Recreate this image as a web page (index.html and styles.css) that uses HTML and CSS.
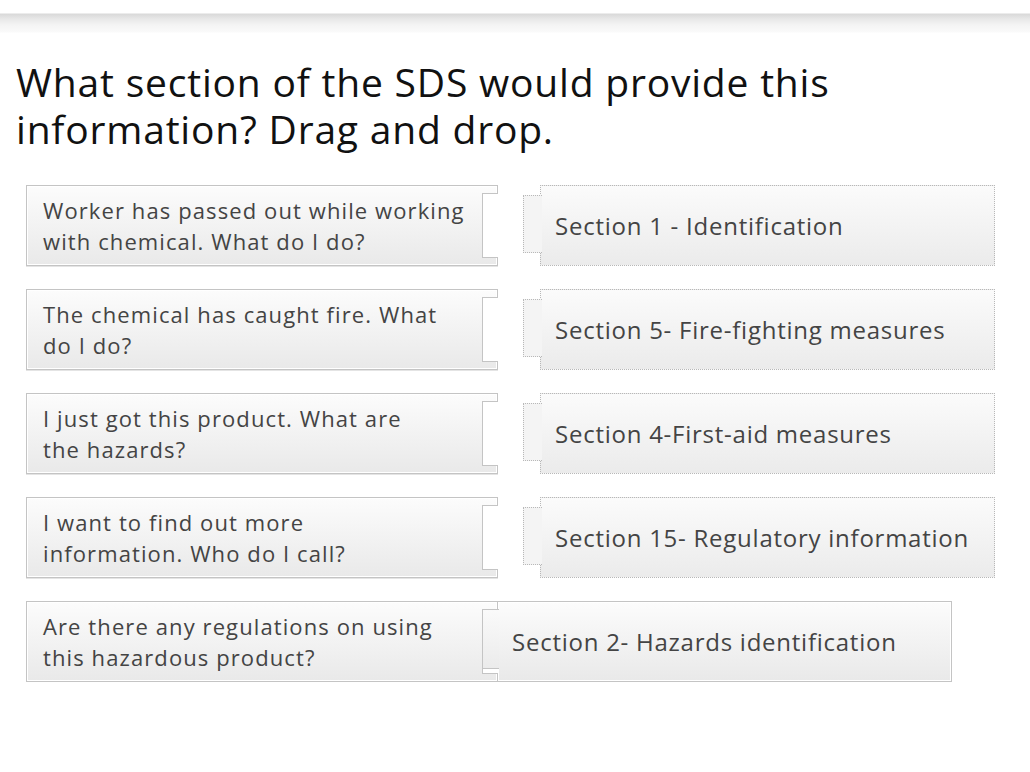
FILE: index.html
```html
<!DOCTYPE html>
<html lang="en">
<head>
    <meta charset="UTF-8">
    <title>SDS Drag and Drop</title>
    <link rel="stylesheet" href="styles.css">
</head>
<body>

    <!-- Top bar -->
    <div class="topbar"></div>

    <h1 class="question">What section of the SDS would provide this information? Drag and drop.</h1>

    <!-- Matching rows -->
    <div class="board">
        <div class="row">
            <div class="prompt">Worker has passed out while working<br>with chemical. What do I do?</div>
            <div class="target">Section 1 - Identification</div>
        </div>
        <div class="row">
            <div class="prompt">The chemical has caught fire. What<br>do I do?</div>
            <div class="target">Section 5- Fire-fighting measures</div>
        </div>
        <div class="row">
            <div class="prompt">I just got this product. What are<br>the hazards?</div>
            <div class="target">Section 4-First-aid measures</div>
        </div>
        <div class="row">
            <div class="prompt">I want to find out more<br>information. Who do I call?</div>
            <div class="target">Section 15- Regulatory information</div>
        </div>
        <div class="row">
            <div class="prompt">Are there any regulations on using<br>this hazardous product?</div>
            <div class="answer">Section 2- Hazards identification</div>
        </div>
    </div>

</body>
</html>
```

FILE: styles.css
```css
body {
    margin: 0;
    font-family: "Open Sans", "DejaVu Sans", sans-serif;
    background: #fff;
    color: #111;
}

/* Top shadow bar */
.topbar {
    height: 33px;
    background: linear-gradient(to bottom, #fff 0, #fff 13px, #d9d9d9 14px, #e8e8e8 19px, #f4f4f4 25px, #fafafa 32px, #fff 33px);
}

.question {
    font-size: 39px;
    font-weight: normal;
    letter-spacing: 0.8px;
    line-height: 47px;
    margin: 25px 0 0 16px;
    width: 880px;
    color: #111;
}

/* Rows */
.board {
    display: flex;
    flex-direction: column;
    gap: 23px;
    margin: 33px 0 0 26px;
}

.row {
    display: flex;
    height: 81px;
}

.prompt, .target, .answer {
    box-sizing: border-box;
    position: relative;
    display: flex;
    align-items: center;
    line-height: 31px;
    color: #444;
}

/* Question piece with notch */
.prompt {
    width: 472px;
    padding: 0 20px 0 16px;
    font-size: 22px;
    letter-spacing: 1.1px;
    border: 1px solid #c4c4c4;
    box-shadow: inset 0 0 0 1px #fff, 0 1px 0 #e4e4e4;
    background: linear-gradient(to bottom, #fcfcfc, #e9e9e9);
}

.prompt::after {
    content: "";
    position: absolute;
    right: -1px;
    top: 7px;
    bottom: 7px;
    width: 15px;
    background: #fff;
    border: 1px solid #c4c4c4;
    border-right: none;
}

/* Empty drop target */
.target, .answer {
    font-size: 24px;
    letter-spacing: 0.75px;
}

.target {
    width: 455px;
    margin-left: 42px;
    padding-left: 14px;
    border: 1px dotted #b8b8b8;
    background: linear-gradient(to bottom, #fbfbfb, #ebebeb);
}

.target::before {
    content: "";
    position: absolute;
    left: -18px;
    top: 9px;
    bottom: 12px;
    width: 18px;
    background: #f4f4f4;
    border: 1px dotted #b8b8b8;
    border-right: none;
}

/* Placed answer piece */
.answer {
    width: 454px;
    padding-left: 14px;
    border: 1px solid #c4c4c4;
    border-left: none;
    box-shadow: inset 0 0 0 1px #fff, 0 1px 0 #e4e4e4;
    background: linear-gradient(to bottom, #fcfcfc, #e9e9e9);
}

.answer::before {
    content: "";
    position: absolute;
    left: -16px;
    top: 7px;
    bottom: 12px;
    width: 16px;
    background: linear-gradient(to bottom, #fafafa, #ebebeb);
    border: 1px solid #c4c4c4;
    border-right: none;
}
```
